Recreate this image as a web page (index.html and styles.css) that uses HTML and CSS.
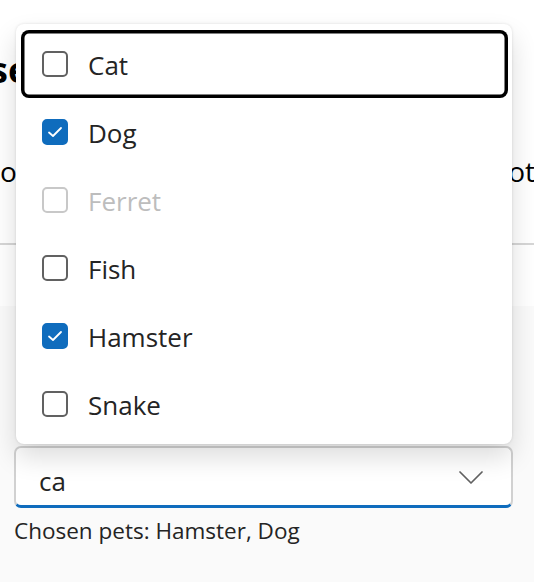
FILE: index.html
```html
<!DOCTYPE html>
<html lang="en">
<head>
<meta charset="utf-8">
<title>Multiselect combobox</title>
<link rel="stylesheet" href="styles.css">
</head>
<body>
<div class="page">
  <section class="docs">
    <h2 class="docs-title">se</h2>
    <p class="docs-text"><span>o</span><span>ot</span></p>
    <hr class="docs-rule">
  </section>
  <section class="canvas">
    <div class="field">
      <div class="combobox">
        <span class="combobox-value">ca</span>
        <svg class="chevron" width="24" height="14" viewBox="0 0 24 14" aria-hidden="true">
          <path d="M1 1 L12 12 L23 1" fill="none" stroke="#616161" stroke-width="1.7" stroke-linecap="round" stroke-linejoin="round"/>
        </svg>
      </div>
      <div class="chosen">Chosen pets: Hamster, Dog</div>
    </div>
  </section>
  <div class="listbox" role="listbox">
    <div class="option focused">
      <span class="check"></span><span class="label">Cat</span>
    </div>
    <div class="option">
      <span class="check checked"><svg width="16" height="12" viewBox="0 0 16 12"><path d="M2 6.5 L6 10 L14 2" fill="none" stroke="#fff" stroke-width="1.8" stroke-linecap="round" stroke-linejoin="round"/></svg></span><span class="label">Dog</span>
    </div>
    <div class="option disabled">
      <span class="check"></span><span class="label">Ferret</span>
    </div>
    <div class="option">
      <span class="check"></span><span class="label">Fish</span>
    </div>
    <div class="option">
      <span class="check checked"><svg width="16" height="12" viewBox="0 0 16 12"><path d="M2 6.5 L6 10 L14 2" fill="none" stroke="#fff" stroke-width="1.8" stroke-linecap="round" stroke-linejoin="round"/></svg></span><span class="label">Hamster</span>
    </div>
    <div class="option">
      <span class="check"></span><span class="label">Snake</span>
    </div>
  </div>
</div>
</body>
</html>
```

FILE: styles.css
```css
* { box-sizing: border-box; }
html, body { margin: 0; padding: 0; }
body {
  font-family: "Open Sans", "Noto Sans", "Liberation Sans", sans-serif;
  color: #242424;
  background: #fafafa;
  width: 534px;
  height: 582px;
  overflow: hidden;
}
.page {
  position: relative;
  width: 534px;
  height: 582px;
}
.docs {
  background: #ffffff;
  height: 306px;
  padding-top: 44px;
  overflow: hidden;
}
.docs-title {
  margin: 0;
  font-size: 36px;
  line-height: 52px;
  font-weight: 700;
  color: #000;
  text-indent: -10px;
}
.docs-text {
  margin: 57px 0 0;
  display: flex;
  justify-content: space-between;
  font-size: 28px;
  line-height: 36px;
  color: #000;
  white-space: nowrap;
}
.docs-text span:last-child { margin-right: -1px; }
.docs-rule {
  margin: 54px 0 0;
  border: 0;
  border-top: 2px solid #d6d6d6;
}
.canvas {
  padding: 140px 0 0 14px;
}
.field {
  width: 499px;
}
.combobox {
  height: 62px;
  display: flex;
  align-items: center;
  justify-content: space-between;
  padding: 0 28px 0 23px;
  background: #ffffff;
  border: 2px solid #d1d1d1;
  border-bottom: 3px solid #0f6cbd;
  border-radius: 7px;
}
.combobox-value {
  font-size: 26px;
  line-height: 36px;
  padding-top: 8px;
}
.chevron { display: block; margin-top: 2px; }
.chosen {
  margin-top: 8px;
  font-size: 22.5px;
  line-height: 30px;
}
.listbox {
  position: absolute;
  left: 16px;
  top: 24px;
  width: 496px;
  height: 420px;
  background: #ffffff;
  border-radius: 8px;
  padding: 6px 4px 6px 5px;
  box-shadow: 0 0 3px rgba(0,0,0,0.12), 0 13px 27px rgba(0,0,0,0.14);
  display: flex;
  flex-direction: column;
}
.option {
  height: 68px;
  display: flex;
  align-items: center;
  padding-left: 21px;
  gap: 20px;
  border-radius: 8px;
  font-size: 26px;
  color: #242424;
}
.option.focused {
  box-shadow: inset 0 0 0 3.5px #000;
}
.check {
  width: 26px;
  height: 26px;
  flex: none;
  border: 2px solid #616161;
  border-radius: 5px;
  display: flex;
  align-items: center;
  justify-content: center;
}
.check.checked {
  background: #0f6cbd;
  border-color: #0f6cbd;
}
.option.disabled { color: #bdbdbd; }
.option.disabled .check { border-color: #c8c8c8; }
.label { line-height: 36px; padding-top: 2px; }
```
